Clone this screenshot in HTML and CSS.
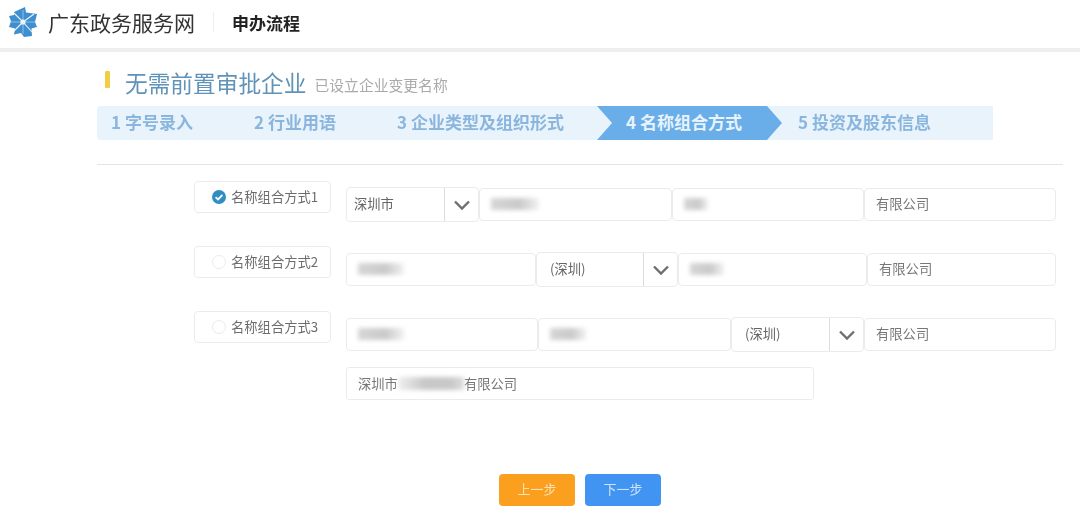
FILE: index.html
```html
<!DOCTYPE html>
<html lang="zh-CN">
<head>
<meta charset="utf-8">
<title>申办流程</title>
<link rel="stylesheet" href="styles.css">
</head>
<body>
<header class="topbar">
  <svg class="logo" viewBox="0 0 28 30" aria-hidden="true">
    <path fill="#3f8fd0" d="M5 5 16 0 17 5.500 28 7 26 15 28 20 22.500 21.500 23 29 15 30 12 26 5 27.500 6 21.500 0 20 2 14 0 9 5 8Z"/>
    <path fill="none" stroke="#eaf5fc" stroke-width="1.100" d="M14 15 5 6M14 15 25 7M14 15 23 25M14 15 5 24"/>
    <path fill="none" stroke="#a9d4f0" stroke-width=".7" d="M14 15 14 3M14 15 26 15M14 15 14 27M14 15 2 15"/>
    <circle cx="14" cy="15" r="2.600" fill="#eaf5fc"/>
  </svg>
  <span class="brand">广东政务服务网</span>
  <span class="topbar-sep"></span>
  <span class="crumb">申办流程</span>
</header>
<main class="page">
  <div class="title-row">
    <span class="title-mark"></span>
    <h1 class="title">无需前置审批企业</h1>
    <span class="subtitle">已设立企业变更名称</span>
  </div>
  <ol class="steps">
    <li class="step s1">1 字号录入</li>
    <li class="step s2">2 行业用语</li>
    <li class="step s3">3 企业类型及组织形式</li>
    <li class="step s4">4 名称组合方式</li>
    <li class="step s5">5 投资及股东信息</li>
  </ol>
  <hr class="divider">
  <div class="rows">
    <div class="row">
      <div class="option"><span class="radio checked"><svg viewBox="0 0 14 14"><path d="M3.600 7.200 6 9.400 10.400 5" fill="none" stroke="#fff" stroke-width="1.800"/></svg></span>名称组合方式1</div>
      <div class="fields">
        <div class="select w133"><span class="select-text t1">深圳市</span><span class="arrow"><svg viewBox="0 0 18 12"><path d="M2 2.500 9 9.500 16 2.500" fill="none" stroke="#6f6f6f" stroke-width="2.400"/></svg></span></div>
        <div class="input w193"><span class="smear sm48"></span></div>
        <div class="input w192"><span class="smear sm24"></span></div>
        <div class="input w192">有限公司</div>
      </div>
    </div>
    <div class="row">
      <div class="option"><span class="radio"></span>名称组合方式2</div>
      <div class="fields">
        <div class="input w190"><span class="smear sm46"></span></div>
        <div class="select w142"><span class="select-text t2">(深圳)</span><span class="arrow"><svg viewBox="0 0 18 12"><path d="M2 2.500 9 9.500 16 2.500" fill="none" stroke="#6f6f6f" stroke-width="2.400"/></svg></span></div>
        <div class="input w189"><span class="smear sm34"></span></div>
        <div class="input w189">有限公司</div>
      </div>
    </div>
    <div class="row">
      <div class="option"><span class="radio"></span>名称组合方式3</div>
      <div class="fields">
        <div class="input w192"><span class="smear sm46"></span></div>
        <div class="input w193"><span class="smear sm36"></span></div>
        <div class="select w133"><span class="select-text t2">(深圳)</span><span class="arrow"><svg viewBox="0 0 18 12"><path d="M2 2.500 9 9.500 16 2.500" fill="none" stroke="#6f6f6f" stroke-width="2.400"/></svg></span></div>
        <div class="input w192">有限公司</div>
      </div>
    </div>
  </div>
  <div class="result">深圳市<span class="smear sm64"></span>有限公司</div>
  <div class="actions">
    <button class="btn prev" type="button">上一步</button>
    <button class="btn next" type="button">下一步</button>
  </div>
</main>
</body>
</html>
```
FILE: styles.css
```css
* { box-sizing: border-box; }
html, body { margin: 0; height: 516px; overflow: hidden; background: #fff; }
body { font-family: "Noto Sans CJK SC", "Liberation Sans", sans-serif; color: #666; }

.topbar { display: flex; align-items: center; height: 52px; padding: 0 0 4px 9px; border-bottom: 4px solid #eeeeee; filter: blur(.4px); }
.logo { width: 28px; height: 30px; margin-right: 11px; }
.brand { font-size: 21px; line-height: 28px; color: #333; }
.topbar-sep { width: 1px; height: 20px; margin: 0 18px; background: #eeeeee; }
.crumb { font-size: 17px; font-weight: 700; color: #222; }

.page { padding: 0 17px 0 97px; filter: blur(.4px); }
.title-row { display: flex; align-items: center; height: 36px; margin-top: 12px; padding-left: 8px; }
.title-mark { width: 5px; height: 17px; margin: -5px 15px 0 0; background: #f0cf45; border-radius: 1px; }
.title { margin: 0; font-size: 22.7px; font-weight: 400; color: #5f93b8; }
.subtitle { margin: 5px 0 0 8px; font-size: 14.8px; color: #aaa; }

.steps { display: flex; width: 896px; height: 34px; margin: 6px 0 0; padding: 0; list-style: none; background: #e9f3fc; border-radius: 4px 0 0 4px; }
.step { font-size: 17px; font-weight: 700; line-height: 32px; color: #8ab6de; white-space: nowrap; }
.s1, .s2 { width: 143px; padding-left: 14px; }
.s3 { width: 214px; padding-left: 14px; }
.s4 { width: 185px; padding-left: 29px; color: #e8f3fd; background: #6aaee9; clip-path: polygon(0 0, 170px 0, 185px 50%, 170px 100%, 0 100%, 15px 50%); }
.s5 { width: 211px; padding-left: 16px; }

.divider { height: 1px; margin: 24px 0 16px; border: 0; background: #e4e4e4; }

.rows { display: flex; flex-direction: column; gap: 24px; }
.row { display: flex; height: 41px; padding-left: 97px; }
.option { display: flex; align-items: center; width: 137px; height: 32px; padding: 0 0 2px 17px; margin-right: 15px; border: 1px solid #ebebeb; border-radius: 4px; font-size: 13.3px; color: #6c6c6c; }
.radio { flex: none; width: 14px; height: 14px; margin: 2px 5px 0 0; border: 1px solid #eaeaea; border-radius: 50%; }
.radio svg { display: block; width: 14px; height: 14px; }
.radio.checked { border: 0; background: #2f8fc4; }

.fields { display: flex; align-items: center; height: 35px; margin-top: 6px; }
.input { display: flex; align-items: center; height: 33px; padding: 0 0 2px 11px; background: #fff; border: 1px solid #ebebeb; border-radius: 4px; font-size: 13.3px; color: #777; }
.select { display: flex; align-items: center; height: 35px; background: #fff; border: 1px solid #ebebeb; border-radius: 4px; font-size: 13.3px; color: #666; }
.select-text { flex: 1; padding-bottom: 2px; }
.t1 { padding-left: 7px; }
.t2 { padding-left: 13px; }
.arrow { display: flex; align-items: center; justify-content: center; width: 34px; height: 100%; border-left: 1px solid #dcdcdc; }
.arrow svg { width: 18px; height: 12px; }

.w133 { width: 133px; }
.w142 { width: 142px; }
.w189 { width: 189px; }
.w190 { width: 190px; }
.w192 { width: 192px; }
.w193 { width: 193px; }

.smear { display: block; height: 12px; background: linear-gradient(90deg, #d6d6d6, #cacaca 60%, #f2f2f2); filter: blur(2px); }
.sm24 { width: 24px; }
.sm34 { width: 34px; }
.sm36 { width: 36px; }
.sm46 { width: 46px; }
.sm48 { width: 48px; }
.sm64 { width: 66px; height: 13px; background: linear-gradient(90deg, #f0f0f0, #c8c8c8 40%, #c8c8c8 80%, #dddddd); }

.result { display: flex; align-items: center; width: 468px; height: 33px; margin: 15px 0 0 249px; padding: 0 0 1px 11px; border: 1px solid #ebebeb; border-radius: 3px; font-size: 13.3px; color: #777; }

.actions { display: flex; gap: 10px; margin: 74px 0 0 402px; }
.btn { width: 76px; height: 32px; padding: 0 0 3px; border: 0; border-radius: 4px; font-family: inherit; font-size: 13px; color: #fff; }
.prev { background: #fb9f1e; color: #fde2b4; }
.next { background: #4294f2; color: #cfe4fb; }
```
